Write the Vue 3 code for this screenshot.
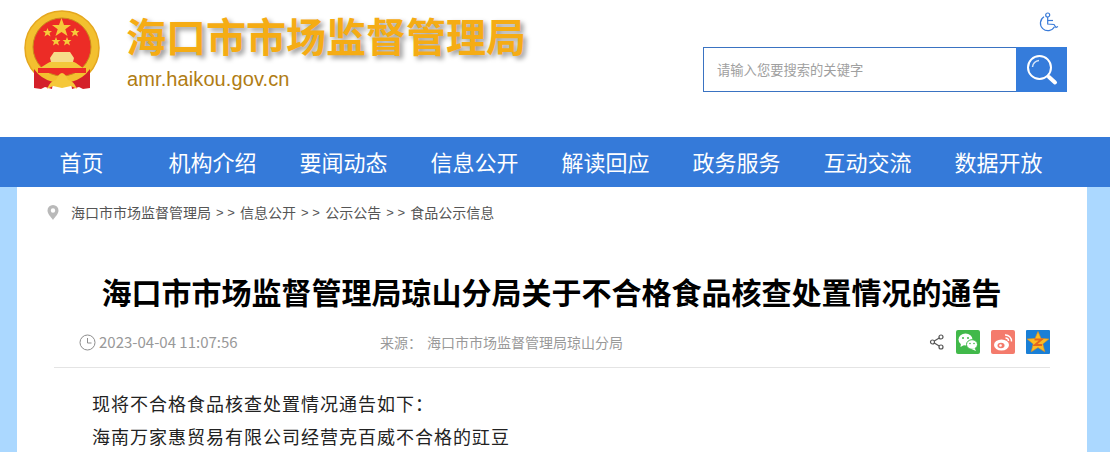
<template>
  <div class="page">
    <header class="top">
      <div class="brand">
        <svg class="emblem" width="78" height="82" viewBox="0 0 78 82">
          <circle cx="39" cy="39" r="37" fill="#f3c02f" stroke="#e5a71f" stroke-width="1.500" />
          <circle cx="39" cy="38" r="29" fill="#ec2c26" stroke="#c98a1c" stroke-width="1" />
          <polygon fill="#f6cb3a" points="38.500,9 41,16 48,16 42.300,20.300 44.500,27 38.500,23 32.500,27 34.700,20.300 29,16 36,16" />
          <polygon fill="#f6cb3a" points="24.500,19 25.700,22 29,22 26.500,24 27.500,27.500 24.500,25.500 21.500,27.500 22.500,24 20,22 23.300,22" />
          <polygon fill="#f6cb3a" points="52,19 53.200,22 56.500,22 54,24 55,27.500 52,25.500 49,27.500 50,24 47.500,22 50.800,22" />
          <polygon fill="#f6cb3a" points="33,28 34.200,31 37.500,31 35,33 36,36.500 33,34.500 30,36.500 31,33 28.500,31 31.800,31" />
          <polygon fill="#f6cb3a" points="44,28 45.200,31 48.500,31 46,33 47,36.500 44,34.500 41,36.500 42,33 39.500,31 42.800,31" />
          <path d="M27 49 L31 43 L47 43 L51 49 L50 53 L28 53 Z" fill="#f6dc8a" />
          <path d="M27 53 L51 53 L53 54 L60 59 L17 59 L25 54 Z" fill="#f3c83b" />
          <rect x="15" y="59" width="48" height="5" fill="#ec2c26" />
          <path d="M11 60 Q18 70 30 73 L29 80 L22 78 L18 80 L11 79 Z" fill="#d4202a" />
          <path d="M67 60 Q60 70 48 73 L49 80 L56 78 L60 80 L67 79 Z" fill="#d4202a" />
          <path d="M24 80 Q27 72 33 71 Q36 64 39 64 Q42 64 45 71 Q51 72 54 80 L48 77 L39 79 L30 77 Z" fill="#f5c83a" />
        </svg>
        <div class="brand-text">
          <div class="site-name">海口市市场监督管理局</div>
          <div class="site-url">amr.haikou.gov.cn</div>
        </div>
      </div>
      <div class="tools">
        <svg class="access" width="22" height="22" viewBox="0 0 22 22" fill="none" stroke="#3a7bd8" stroke-width="1.200">
          <circle cx="10.700" cy="4" r="2" />
          <path d="M10.700 6 L10.700 13 L17 13.500 L19 16.500 L21 15.500" />
          <path d="M10.700 9.500 L16 9.500" />
          <path d="M7 5.800 A7.500 7.500 0 1 0 17.500 15.800" />
        </svg>
        <div class="search">
          <div class="search-input">请输入您要搜索的关键字</div>
          <div class="search-btn">
            <svg width="32" height="32" viewBox="0 0 32 32" fill="none">
              <circle cx="13.500" cy="13.500" r="11.500" stroke="#fff" stroke-width="2" />
              <path d="M6.500 13 A7 7 0 0 1 13 6.500" stroke="#d8e6f8" stroke-width="1.500" />
              <path d="M23 23 L29 28.500" stroke="#fff" stroke-width="4" stroke-linecap="round" />
            </svg>
          </div>
        </div>
      </div>
    </header>

    <nav class="nav">
      <a v-for="item in navItems" :key="item">{{ item }}</a>
    </nav>

    <main class="sheet">
      <div class="crumbs">
        <svg width="12" height="15" viewBox="0 0 12 15">
          <path fill-rule="evenodd" fill="#b9b9b9" d="M6 0 A5.500 5.500 0 0 1 11.500 5.500 C11.500 9 8 12 6 15 C4 12 .5 9 .5 5.500 A5.500 5.500 0 0 1 6 0 Z M6 3.300 A2.200 2.200 0 1 0 6 7.700 A2.200 2.200 0 1 0 6 3.300 Z" />
        </svg>
        <span>海口市市场监督管理局</span>
        <i>&gt; &gt;</i>
        <span>信息公开</span>
        <i>&gt; &gt;</i>
        <span>公示公告</span>
        <i>&gt; &gt;</i>
        <span>食品公示信息</span>
      </div>

      <h1 class="title">海口市市场监督管理局琼山分局关于不合格食品核查处置情况的通告</h1>

      <div class="meta">
        <div class="meta-time">
          <svg width="17" height="17" viewBox="0 0 17 17" fill="none" stroke="#8d8d8d" stroke-width="1">
            <circle cx="8.500" cy="8.500" r="7.500" />
            <path d="M8.500 4 L8.500 9 L12.500 9" />
          </svg>
          <span>2023-04-04 11:07:56</span>
        </div>
        <div class="meta-source">来源：<span>海口市市场监督管理局琼山分局</span></div>
        <div class="share">
          <svg width="16" height="16" viewBox="0 0 16 16" fill="none" stroke="#555" stroke-width="1.200">
            <circle cx="3.500" cy="8" r="2" />
            <circle cx="12" cy="3" r="2" />
            <circle cx="12" cy="13" r="2" />
            <path d="M5.300 7 L10.200 4 M5.300 9 L10.200 12" />
          </svg>
          <svg class="badge" width="24" height="24" viewBox="0 0 24 24">
            <rect width="24" height="24" rx="2" fill="#41b94a" />
            <ellipse cx="9.500" cy="9.500" rx="7" ry="6" fill="#fff" />
            <path d="M5 13 L4.500 17 L9 14.500 Z" fill="#fff" />
            <ellipse cx="16" cy="14.500" rx="5.500" ry="4.800" fill="#fff" stroke="#41b94a" stroke-width="1" />
            <path d="M18.500 18 L20 21 L15.500 19 Z" fill="#fff" />
            <circle cx="7" cy="8" r="1" fill="#41b94a" />
            <circle cx="12" cy="8" r="1" fill="#41b94a" />
            <circle cx="14" cy="13.500" r=".8" fill="#41b94a" />
            <circle cx="18" cy="13.500" r=".8" fill="#41b94a" />
          </svg>
          <svg class="badge" width="24" height="24" viewBox="0 0 24 24">
            <rect width="24" height="24" rx="2" fill="#f47b6c" />
            <ellipse cx="10.500" cy="15" rx="7.500" ry="5.500" fill="#fff" />
            <ellipse cx="10" cy="15.500" rx="3.500" ry="2.700" fill="#f47b6c" />
            <circle cx="9.500" cy="15.500" r="1.300" fill="#fff" />
            <path d="M14 5 A6 6 0 0 1 20.500 11.500 M14.500 8 A3 3 0 0 1 17.500 11" fill="none" stroke="#fff" stroke-width="1.400" />
          </svg>
          <svg class="badge" width="24" height="24" viewBox="0 0 24 24">
            <rect width="24" height="24" rx="1" fill="#1a7fd6" />
            <polygon fill="#fbbd24" stroke="#e88f1a" stroke-width=".6" points="12,1.500 15,8.500 22.800,9 16.800,14 18.800,21.800 12,17.600 5.200,21.800 7.200,14 1.200,9 9,8.500" />
            <path d="M8.500 9.500 L15.500 9.500 L9 15 L16 15" fill="none" stroke="#e6661c" stroke-width="2" />
          </svg>
        </div>
      </div>

      <article class="body">
        <p>现将不合格食品核查处置情况通告如下：</p>
        <p>海南万家惠贸易有限公司经营克百威不合格的豇豆</p>
      </article>
    </main>
  </div>
</template>

<script setup>
const navItems = ['首页', '机构介绍', '要闻动态', '信息公开', '解读回应', '政务服务', '互动交流', '数据开放']
</script>

<style>
html, body { margin: 0; padding: 0; background: #fff; overflow: hidden; }
</style>

<style scoped>
.page {
  width: 1110px;
  height: 452px;
  overflow: hidden;
  background: #abd8ff;
  font-family: "Noto Sans CJK SC", "Liberation Sans", sans-serif;
}
.top {
  height: 137px;
  box-sizing: border-box;
  background: #fff;
  display: flex;
  justify-content: space-between;
  padding: 9px 43px 0 23px;
}
.brand { display: flex; align-items: flex-start; }
.brand-text { margin-left: 26px; }
.site-name {
  margin-left: -1px;
  font-size: 40px;
  line-height: 52px;
  font-weight: 700;
  color: #f5ac14;
  text-shadow: 3px 3px 5px rgba(0, 0, 0, .4);
  white-space: nowrap;
}
.site-url {
  margin-top: 4px;
  font-family: "Liberation Sans", sans-serif;
  font-size: 20px;
  line-height: 28px;
  letter-spacing: .1px;
  color: #b07c14;
}
.tools { display: flex; flex-direction: column; align-items: flex-end; }
.access { margin: 2px 8px 0 0; }
.search {
  margin-top: 14px;
  display: flex;
  width: 364px;
  height: 45px;
}
.search-input {
  flex: 1;
  box-sizing: border-box;
  border: 1px solid #3a73c2;
  border-right: 0;
  padding-left: 13px;
  font-size: 13.300px;
  line-height: 43px;
  color: #a0a0a0;
}
.search-btn {
  width: 51px;
  background: #357cdb;
  display: flex;
  align-items: center;
  justify-content: center;
}
.nav {
  height: 50px;
  background: #357ad9;
  display: flex;
  padding-left: 16px;
}
.nav a {
  width: 131px;
  text-align: center;
  font-size: 22px;
  line-height: 48px;
  height: 50px;
  color: #fff;
  white-space: nowrap;
}
.sheet {
  margin: 0 23px 0 17px;
  height: 265px;
  background: #fff;
  padding: 0 37px;
}
.crumbs {
  display: flex;
  align-items: center;
  height: 50px;
  font-size: 14px;
  color: #555;
  margin-left: -7px;
}
.crumbs svg { margin-right: 12px; }
.crumbs i { font-style: normal; margin: 0 5.300px 0 5px; font-family: "Liberation Sans", sans-serif; font-size: 13px; }
.title {
  margin: 32px 0 0 -1px;
  font-size: 30px;
  line-height: 44px;
  font-weight: 700;
  color: #000;
  text-align: center;
  white-space: nowrap;
}
.meta {
  margin-top: 17px;
  height: 38px;
  box-sizing: border-box;
  border-bottom: 1px solid #e4e4e4;
  display: flex;
  align-items: flex-start;
  font-size: 15px;
  line-height: 24px;
  color: #999;
  padding-left: 25px;
}
.meta-time { display: flex; align-items: center; gap: 3px; width: 301px; }
.meta-source { font-size: 14px; }
.meta-source span { margin-left: 5px; }
.share { margin-left: auto; display: flex; align-items: center; }
.share svg { margin-left: 11px; }
.body { padding: 19px 0 0 38px; font-size: 18px; line-height: 33px; letter-spacing: 1px; color: #222; }
.body p { margin: 0; }
</style>
